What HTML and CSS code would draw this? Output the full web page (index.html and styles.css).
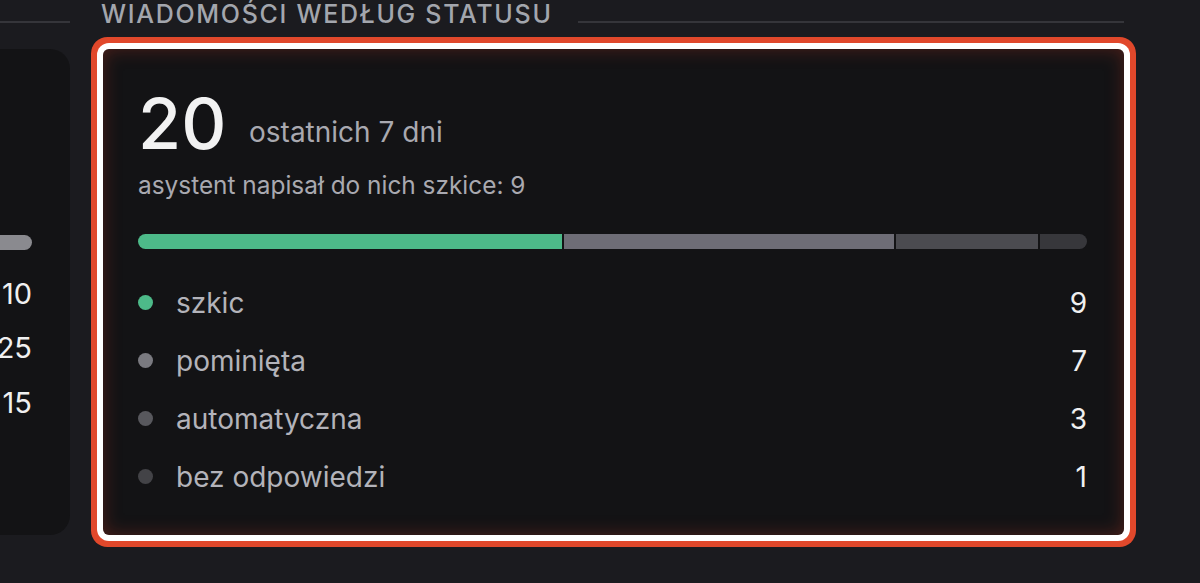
FILE: index.html
```html
<!DOCTYPE html>
<html lang="pl">
<head>
  <meta charset="UTF-8">
  <meta name="viewport" content="width=device-width, initial-scale=1.0">
  <title>Wiadomości według statusu</title>
  <link rel="stylesheet" href="styles.css">
</head>
<body>
  <div class="board">
    <section class="column column-side">
      <div class="section-title section-title-bare">
        <span class="rule"></span>
      </div>
      <div class="card card-side">
        <div class="bar bar-side"></div>
        <ul class="side-list">
          <li><span class="count">10</span></li>
          <li><span class="count">25</span></li>
          <li><span class="count">15</span></li>
        </ul>
      </div>
    </section>

    <section class="column column-main">
      <div class="section-title">
        <h2>Wiadomości według statusu</h2>
        <span class="rule"></span>
      </div>
      <div class="card card-main">
        <div class="total">
          <span class="total-num">20</span>
          <span class="total-label">ostatnich 7 dni</span>
        </div>
        <p class="sub">asystent napisał do nich szkice: 9</p>
        <div class="bar">
          <span class="seg seg-draft" style="flex-grow: 9"></span>
          <span class="seg seg-skipped" style="flex-grow: 7"></span>
          <span class="seg seg-auto" style="flex-grow: 3"></span>
          <span class="seg seg-none" style="flex-grow: 1"></span>
        </div>
        <ul class="legend">
          <li><span class="dot dot-draft"></span><span class="name">szkic</span><span class="count">9</span></li>
          <li><span class="dot dot-skipped"></span><span class="name">pominięta</span><span class="count">7</span></li>
          <li><span class="dot dot-auto"></span><span class="name">automatyczna</span><span class="count">3</span></li>
          <li><span class="dot dot-none"></span><span class="name">bez odpowiedzi</span><span class="count">1</span></li>
        </ul>
      </div>
    </section>
  </div>
</body>
</html>
```

FILE: styles.css
```css
/* Reset */
* {
  margin: 0;
  padding: 0;
  box-sizing: border-box;
}

body {
  min-height: 100vh;
  background-color: #1b1b1f;
  font-family: Inter, "Noto Sans", sans-serif;
}

.board {
  display: flex;
  gap: 33px;
  margin-left: -530px;
  padding-right: 76px;
  padding-bottom: 40px;
}

.column {
  display: flex;
  flex-direction: column;
}

.column-side {
  width: 600px;
  flex-shrink: 0;
}

.column-main {
  flex: 1;
}

/* Section heading with rule */
.section-title {
  display: flex;
  align-items: baseline;
  gap: 25px;
  margin-top: -1px;
}

.section-title h2 {
  font-size: 25px;
  line-height: 30px;
  font-weight: 500;
  letter-spacing: 1.7px;
  text-transform: uppercase;
  color: #a3a6ad;
  white-space: nowrap;
}

.column-main .section-title h2 {
  margin-left: -2px;
}

.section-title .rule {
  flex: 1;
  height: 2px;
  background-color: #35353a;
}

.section-title-bare {
  height: 30px;
  align-items: flex-start;
}

.section-title-bare .rule {
  margin-top: 22px;
}

/* Cards */
.card {
  flex: 1;
  margin-top: 20px;
  padding: 40px 37px 29px 35px;
  background-color: #131315;
  border-radius: 6px;
}

.card-side {
  border-radius: 20px;
  padding-top: 186px;
  padding-right: 38px;
}

.card-main {
  box-shadow:
    0 0 0 6px #ffffff,
    0 0 0 12px #e1482b,
    inset 0 0 18px rgba(190, 55, 35, 0.35);
}

.total {
  font-size: 70px;
  line-height: 1;
  white-space: nowrap;
}

.total-num {
  font-weight: 500;
  color: #f2f2f2;
}

.total-label {
  margin-left: 3px;
  font-size: 28px;
  vertical-align: 7px;
  color: #a9a9b0;
}

.sub {
  margin-top: 11px;
  font-size: 24.4px;
  line-height: 1.3;
  color: #a9a9b0;
  white-space: nowrap;
}

/* Stacked bar */
.bar {
  display: flex;
  gap: 2px;
  height: 15px;
  margin-top: 32px;
  border-radius: 8px;
  overflow: hidden;
}

.seg {
  flex-basis: 0;
}

.seg-draft { background-color: #4dba89; }
.seg-skipped { background-color: #6e6d76; }
.seg-auto { background-color: #4b4b50; }
.seg-none { background-color: #37373b; }

.bar-side {
  margin-top: 0;
  background-color: #8a8a8f;
}

/* Legend */
.legend {
  list-style: none;
  margin-top: 25px;
}

.legend li {
  display: flex;
  align-items: center;
  height: 58px;
  font-size: 28px;
}

.dot {
  width: 15px;
  height: 15px;
  border-radius: 50%;
  margin-right: 23px;
}

.dot-draft { background-color: #4dba89; }
.dot-skipped { background-color: #7a7a80; }
.dot-auto { background-color: #58585d; }
.dot-none { background-color: #434347; }

.legend .name {
  flex: 1;
  color: #b3b3ba;
}

.count {
  color: #f0f0f0;
}

.side-list {
  list-style: none;
  margin-top: 16px;
}

.side-list li {
  display: flex;
  justify-content: flex-end;
  align-items: center;
  height: 54.5px;
  font-size: 29px;
}
```
